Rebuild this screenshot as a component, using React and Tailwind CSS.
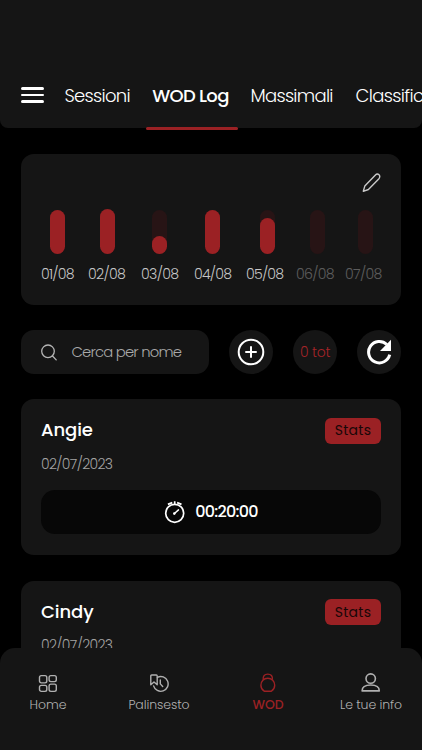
const days = [
  { date: "01/08", bar: "h-11", label: "tracking-[-0.8px]" },
  { date: "02/08", bar: "h-[45px]", label: "tracking-[-0.7px]" },
  { date: "03/08", bar: "h-[18.5px]", label: "tracking-[-0.7px]" },
  { date: "04/08", bar: "h-11", label: "tracking-[-0.8px]" },
  { date: "05/08", bar: "h-9", label: "tracking-[-0.8px]" },
  { date: "06/08", bar: "h-0", label: "tracking-[-0.7px] opacity-40" },
  { date: "07/08", bar: "h-0", label: "tracking-[-0.7px] opacity-40" },
];

function HomeIcon() {
  return (
    <svg width="20" height="20" viewBox="0 0 20 20" fill="none" stroke="currentColor" strokeWidth="1.4">
      <rect x="1.5" y="2.6" width="7.3" height="7.3" rx="1.8" />
      <rect x="11.1" y="2.6" width="7.2" height="6" rx="1.8" />
      <rect x="1.5" y="12.4" width="7.3" height="6" rx="1.8" />
      <rect x="11.1" y="11.1" width="7.2" height="7.3" rx="1.8" />
    </svg>
  );
}

function ScheduleIcon() {
  return (
    <svg width="20" height="20" viewBox="0 0 20 20" fill="none" stroke="currentColor" strokeWidth="1.4" strokeLinecap="round" strokeLinejoin="round">
      <path d="M1.8 11.8V2.9Q1.8 2 2.7 2H7.3Q8.2 2 8.2 2.9V11.8L5 9Z" />
      <path d="M8.4 4.3A7.4 7.4 0 1 1 4.6 12.9" />
      <path d="M11.3 6.9V10.9L13.7 13.5" />
    </svg>
  );
}

function KettlebellIcon() {
  return (
    <svg width="20" height="20" viewBox="0 0 20 20" fill="none" stroke="currentColor" strokeWidth="1.4" strokeLinejoin="round">
      <path d="M5.2 6.8C4.8 3 6.6 1.1 9.8 1.1S14.8 3 14.4 6.8" />
      <path d="M6.2 18.2C4 16.8 2.9 14.8 2.9 12.3C2.9 8.4 5.8 5.2 9.8 5.2S16.7 8.4 16.7 12.3C16.7 14.8 15.6 16.8 13.4 18.2Z" />
    </svg>
  );
}

function UserIcon() {
  return (
    <svg width="20" height="20" viewBox="0 0 20 20" fill="none" stroke="currentColor" strokeWidth="1.6" strokeLinejoin="round">
      <circle cx="9.7" cy="5.6" r="4.7" />
      <path d="M1.1 17.9C1.1 13.7 4.2 12 9.7 12S18.3 13.7 18.3 17.9Z" />
    </svg>
  );
}

function TimerIcon() {
  return (
    <svg width="22" height="24" viewBox="0 0 22 24" fill="none" stroke="currentColor" strokeWidth="1.7" strokeLinecap="round">
      <circle cx="10.7" cy="13.3" r="9" />
      <path d="M10.7 13.3L14.5 9.9" strokeWidth="1.5" />
      <circle cx="10.3" cy="13.6" r="1.3" fill="currentColor" stroke="none" />
      <path d="M10.7 4.3V1.2M3.9 4.4L8.3 2.6M17.5 4.4L13.1 2.6" strokeWidth="1.7" strokeLinecap="butt" />
    </svg>
  );
}

function WodCard({ name, date, time }) {
  return (
    <div className="h-[155.6px] shrink-0 rounded-[13px] bg-[#151515] px-5 pt-[18.6px]">
      <div className="flex h-[26px] items-center justify-between">
        <h2 className="-mt-[2px] text-[18px] font-medium tracking-[-0.1px]">{name}</h2>
        <button className="h-[26px] w-14 rounded-[6px] bg-[#9b2124] text-center text-[14px] tracking-[0.3px] text-[#190708]">
          Stats
        </button>
      </div>
      <p className="mt-[10px] text-[14px] leading-5 font-light tracking-[-0.65px] text-[#a4a4a4]">{date}</p>
      <div className="mt-[16px] flex h-[44.5px] items-center justify-center gap-[9px] rounded-[14px] bg-[#070707]">
        <TimerIcon />
        <span className="text-[16px] font-medium tracking-[-0.75px]">{time}</span>
      </div>
    </div>
  );
}

function App() {
  return (
    <div className="flex h-[750px] w-[422px] flex-col overflow-hidden bg-black font-['Poppins','Inter',sans-serif] text-white">
      <header className="flex h-32 shrink-0 items-end rounded-b-[8px] bg-[#151515] pl-[20.5px]">
        <button className="mb-[25.5px] flex w-[23.5px] shrink-0 flex-col gap-[4px]">
          <span className="h-[2.4px] rounded-full bg-white" />
          <span className="h-[2.4px] rounded-full bg-white" />
          <span className="h-[2.4px] rounded-full bg-white" />
        </button>
        <nav className="ml-[20.5px] flex h-[66px] items-center pt-px text-[18px] leading-[66px] font-light whitespace-nowrap">
          <a className="w-[81.5px] tracking-[-0.7px]">Sessioni</a>
          <a className="relative w-[92px] pr-[3px] text-center font-medium tracking-[-0.7px]">
            WOD Log
            <span className="absolute -bottom-px left-0 h-[3px] w-full rounded-sm bg-[#9b2124]" />
          </a>
          <a className="ml-[12.5px] w-[105px] tracking-[-0.7px]">Massimali</a>
          <a className="tracking-[-0.65px]">Classifica</a>
        </nav>
      </header>

      <main className="flex min-h-0 flex-1 flex-col overflow-hidden px-[21px] pt-[26px]">
        <section className="h-[151px] shrink-0 rounded-[13px] bg-[#151515] pt-[19px]">
          <div className="flex justify-end pr-5">
            <svg width="19" height="20" viewBox="0 0 19 20" fill="none" stroke="#c9c9c9" strokeWidth="1.4" strokeLinejoin="round">
              <path d="M1.3 18.3L2.8 13.1L13.2 2.2C14.5.9 15.9.8 17 1.8S18 4.5 16.7 5.9L6.4 16.5Z" />
            </svg>
          </div>
          <div className="mt-[16px] grid h-[45px] grid-cols-[50px_52px_53px_55px_50px_47.5px_15px] items-end pl-[29px]">
            {days.map((day) => (
              <div key={day.date} className="flex h-11 w-[15px] items-end rounded-full bg-[#271415]">
                <div className={`w-full shrink-0 rounded-full bg-[#9b2124] ${day.bar}`} />
              </div>
            ))}
          </div>
          <div className="mt-[10px] grid grid-cols-[47px_53px_53px_52px_50px_49px_38px] pl-5 text-[14.2px] leading-5 font-light text-[#c6c6c6]">
            {days.map((day) => (
              <span key={day.date} className={day.label}>
                {day.date}
              </span>
            ))}
          </div>
        </section>

        <section className="mt-[25.2px] flex h-11 shrink-0 items-center">
          <div className="flex h-11 w-[188px] items-center rounded-[13px] bg-[#151515] pl-[19.5px]">
            <svg width="16" height="17" viewBox="0 0 16 17" fill="none" stroke="#b5b5b5" strokeWidth="1.3" strokeLinecap="round">
              <circle cx="7" cy="7.3" r="6.3" />
              <path d="M11.5 12L15.2 15.9" />
            </svg>
            <span className="ml-[15px] text-[14.8px] font-light tracking-[-0.8px] whitespace-nowrap text-[#a9a9a9]">
              Cerca per nome
            </span>
          </div>
          <button className="ml-[20.5px] flex size-11 items-center justify-center rounded-full bg-[#151515]">
            <svg width="28" height="28" viewBox="0 0 28 28" fill="none" stroke="white" strokeWidth="2" strokeLinecap="round">
              <circle cx="14" cy="14" r="12.3" />
              <path d="M14 9V19M9 14H19" />
            </svg>
          </button>
          <div className="ml-5 flex size-11 items-center justify-center rounded-full bg-[#151515] text-[14px] font-light tracking-[-0.2px] whitespace-nowrap text-[#a52428]">
            0 tot
          </div>
          <button className="ml-5 flex size-11 items-center justify-center rounded-full bg-[#151515]">
            <svg width="26" height="26" viewBox="0 0 26 26" fill="none">
              <path d="M20.8 5.5A10.7 10.7 0 1 0 23.7 15.7" stroke="white" strokeWidth="3" />
              <path d="M25 .8V12H14Z" fill="white" />
            </svg>
          </button>
        </section>

        <section className="mt-[25.2px] flex flex-col gap-[25.8px]">
          <WodCard name="Angie" date="02/07/2023" time="00:20:00" />
          <WodCard name="Cindy" date="02/07/2023" time="00:20:00" />
        </section>
      </main>

      <footer className="relative -mt-4 h-[102px] shrink-0 rounded-t-[15px] bg-[#151515] text-[12.5px] text-[#b0b0b0]">
        <nav className="flex pt-[25px] leading-[18px] font-light whitespace-nowrap">
          <a className="ml-[18px] flex w-[60px] flex-col items-center gap-[3px]">
            <HomeIcon />
            <span>Home</span>
          </a>
          <a className="ml-[46px] flex w-[70px] flex-col items-center gap-[3px]">
            <ScheduleIcon />
            <span className="tracking-[-0.1px]">Palinsesto</span>
          </a>
          <a className="ml-[44px] flex w-[60px] flex-col items-center gap-[3px] font-medium text-[#9b2124]">
            <KettlebellIcon />
            <span>WOD</span>
          </a>
          <a className="ml-[38px] flex w-[70px] flex-col items-center gap-[3px]">
            <UserIcon />
            <span className="tracking-[-0.1px]">Le tue info</span>
          </a>
        </nav>
      </footer>
    </div>
  );
}

export default App;
